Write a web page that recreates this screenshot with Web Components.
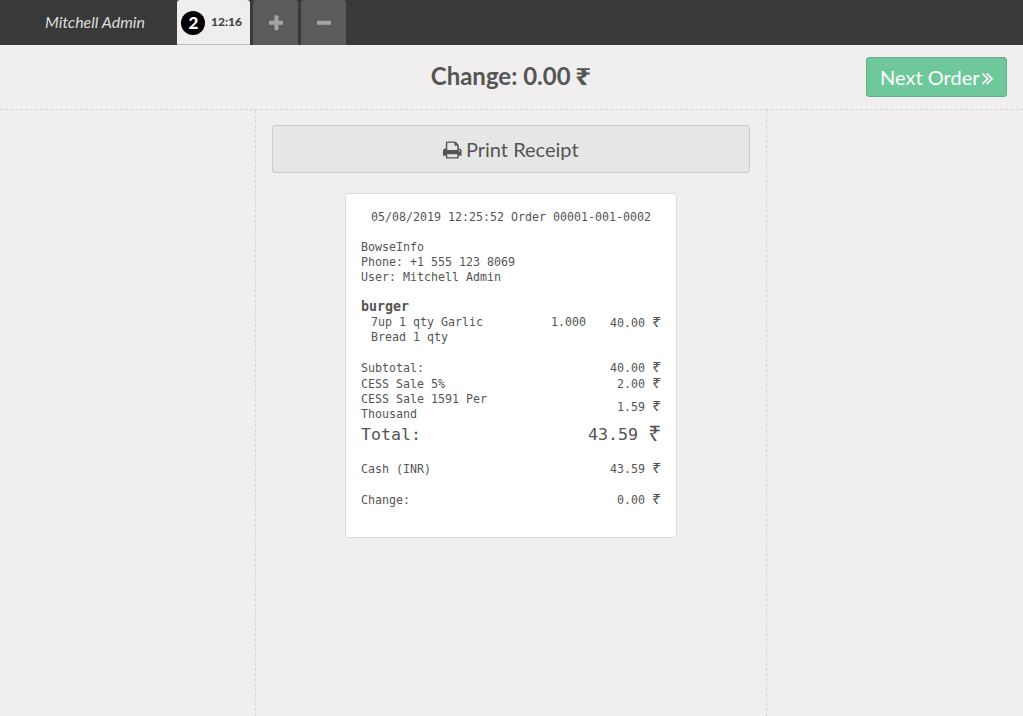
<!DOCTYPE html>
<html lang="en">
<head>
<meta charset="utf-8">
<title>Point of Sale</title>
<style>
html,body{margin:0;height:100%;overflow:hidden}
body{font-family:Lato,"Liberation Sans",sans-serif;color:#555;background:#f0eeee}
</style>
</head>
<body>
<pos-screen></pos-screen>
<script>
const define = (name, html) => {
  const t = document.createElement('template');
  t.innerHTML = html;
  customElements.define(name, class extends HTMLElement {
    constructor() {
      super();
      this.attachShadow({ mode: 'open' }).append(t.content.cloneNode(true));
    }
  });
};

const ICONS = {
  plus: [1408, 'M1408 736v192q0 40-28 68t-68 28h-416v416q0 40-28 68t-68 28h-192q-40 0-68-28t-28-68v-416h-416q-40 0-68-28t-28-68v-192q0-40 28-68t68-28h416v-416q0-40 28-68t68-28h192q40 0 68 28t28 68v416h416q40 0 68 28t28 68z'],
  minus: [1408, 'M1408 736v192q0 40-28 68t-68 28h-1216q-40 0-68-28t-28-68v-192q0-40 28-68t68-28h1216q40 0 68 28t28 68z'],
  print: [1664, 'M384 1536h896v-256h-896v256zM384 896h896v-384h-160q-40 0-68-28t-28-68v-160h-640v640zM1536 960q0-26-19-45t-45-19-45 19-19 45 19 45 45 19 45-19 19-45zM1664 960v416q0 13-9.5 22.5t-22.5 9.5h-224v160q0 40-28 68t-68 28h-960q-40 0-68-28t-28-68v-160h-224q-13 0-22.5-9.5t-9.5-22.5v-416q0-79 56.5-135.5t135.5-56.5h64v-544q0-40 28-68t68-28h672q40 0 88 20t76 48l152 152q28 28 48 76t20 88v256h64q79 0 135.5 56.5t56.5 135.5z'],
  next: [1024, 'M595 960q0 13-10 23l-466 466q-10 10-23 10t-23-10l-50-50q-10-10-10-23t10-23l393-393-393-393q-10-10-10-23t10-23l50-50q10-10 23-10t23 10l466 466q10 10 10 23zM979 960q0 13-10 23l-466 466q-10 10-23 10t-23-10l-50-50q-10-10-10-23t10-23l393-393-393-393q-10-10-10-23t10-23l50-50q10-10 23-10t23 10l466 466q10 10 10 23z']
};
customElements.define('pos-icon', class extends HTMLElement {
  constructor() { super(); this.attachShadow({ mode: 'open' }); }
  connectedCallback() {
    const [w, d] = ICONS[this.getAttribute('name')];
    this.shadowRoot.innerHTML = `<style>:host{display:inline-flex;flex:none}svg{display:block;height:1em;width:${w / 1792}em;fill:currentColor;stroke:currentColor;stroke-width:var(--icon-stroke,0)}</style>
      <svg viewBox="0 0 ${w} 1792" aria-hidden="true"><path d="${d}"/></svg>`;
  }
});

define('order-tab', `<style>
:host{display:flex;align-items:center;justify-content:center;box-sizing:border-box;width:45px;height:45px;font-size:19px;padding:1px 0 0 1px;
background:#5b5b5b;color:#a3a3a3;border-radius:3px 3px 0 0}
:host([active]){width:73px;background:#eee;color:#444;border-bottom:1px solid #bbb;font-size:12px;font-weight:900;justify-content:flex-start;padding:0 0 0 4px;gap:6px}
</style><slot></slot>`);

define('order-number', `<style>
:host{display:block;width:24px;height:24px;border-radius:50%;background:#000;color:#fff;font-size:17px;font-weight:900;line-height:24px;text-align:center;margin-top:1px;text-indent:1px}
</style><slot></slot>`);

define('pos-topbar', `<style>
:host{display:flex;height:45px;background:#393939}
.user{width:177px;box-sizing:border-box;padding-left:45px;font-size:16px;font-style:italic;line-height:44px;color:#ddd;white-space:nowrap}
nav{display:flex;gap:3px}
time{margin-top:-2px}
</style>
<div class="user">Mitchell Admin</div>
<nav>
<order-tab active><order-number>2</order-number><time>12:16</time></order-tab>
<order-tab><pos-icon name="plus"></pos-icon></order-tab>
<order-tab><pos-icon name="minus"></pos-icon></order-tab>
</nav>`);

define('pos-button', `<style>
:host{display:flex;box-sizing:border-box;align-items:center;justify-content:center;gap:4px;font-size:20px;white-space:nowrap;border:1px solid #cacaca;border-radius:3px;background:#e6e6e6;color:#555;height:48px}
:host([primary]){height:40px;width:141px;background:#6ec89b;border-color:#64af8a;color:#fff;padding-left:1px;gap:3px;--icon-stroke:20px}
::slotted(pos-icon){margin-top:1px}
</style><slot></slot>`);

define('rupee-sign', `<style>
:host{display:inline-block;font-family:"Noto Sans",sans-serif;line-height:0;transform:scaleX(1.18);transform-origin:left}
</style>₹`);

define('screen-heading', `<style>
:host{display:grid;grid-template-columns:1fr auto 1fr;box-sizing:border-box;height:65px;padding:0 16px;border-bottom:1px dashed #d5d5d5}
h1{margin:0;padding-right:3px;font-size:24px;font-weight:700;line-height:62px;grid-column:2;white-space:nowrap}
pos-button{justify-self:end;margin-top:12px}
::slotted(rupee-sign){margin-left:-1px}
</style>
<h1><slot></slot></h1>
<pos-button primary><span>Next Order</span><pos-icon name="next"></pos-icon></pos-button>`);

define('receipt-row', `<style>
:host{display:flex;justify-content:space-between;align-items:center;line-height:15px}
:host([total]){font-size:16.62px;line-height:24px}
.label{width:150px}
.amount{white-space:pre;display:flex}
rupee-sign{width:9px;margin-left:7px;font-size:14px;line-height:11px}
:host([total]) rupee-sign{width:13px;margin-left:10px;font-size:20px;line-height:21px}
</style>
<span class="label"><slot></slot></span>
<span class="amount"><slot name="amount"></slot><rupee-sign></rupee-sign></span>`);

define('sale-receipt', `<style>
:host{display:block;box-sizing:border-box;width:332px;height:345px;margin:20px auto 0;padding:16px 15px 14px;background:#fff;border:1px solid #dcdcdc;border-radius:3px;
font:11.63px/15px "DejaVu Sans Mono","Liberation Mono",monospace;color:#555}
header{text-align:center;margin-bottom:15px}
address{font-style:normal;margin-bottom:15px}
h2{font-size:13.29px;line-height:15px;margin:-1px 0 1px}
.line{display:flex;margin-bottom:16px}
.name{width:130px;padding-left:10px}
.qty{width:59px;margin-left:50px}
.price{display:flex;padding-top:1px;height:15px}
.price rupee-sign{width:9px;margin-left:7px;font-size:14px;line-height:11px}
.gap{margin-top:1px}
.pay{margin-top:15px}
.change{margin-top:16px}
</style>
<header>05/08/2019 12:25:52 Order 00001-001-0002</header>
<address>BowseInfo<br>Phone: +1 555 123 8069<br>User: Mitchell Admin</address>
<h2>burger</h2>
<div class="line"><span class="name">7up 1 qty Garlic Bread 1 qty</span><span class="qty">1.000</span><span class="price">40.00<rupee-sign></rupee-sign></span></div>
<receipt-row>Subtotal:<span slot="amount">40.00</span></receipt-row>
<receipt-row class="gap">CESS Sale 5%<span slot="amount">2.00</span></receipt-row>
<receipt-row>CESS Sale 1591 Per Thousand<span slot="amount">1.59</span></receipt-row>
<receipt-row class="gap" total>Total:<span slot="amount">43.59</span></receipt-row>
<receipt-row class="pay">Cash (INR)<span slot="amount">43.59</span></receipt-row>
<receipt-row class="change">Change:<span slot="amount">0.00</span></receipt-row>`);

define('pos-screen', `<style>
:host{display:flex;flex-direction:column;height:100vh}
main{flex:1;display:grid;grid-template-columns:255px 512px 1fr}
section{border:dashed #d5d5d5;border-width:0 1px;padding:15px 16px 0}
</style>
<pos-topbar></pos-topbar>
<screen-heading>Change: 0.00 <rupee-sign></rupee-sign></screen-heading>
<main><div></div><section>
<pos-button><pos-icon name="print"></pos-icon><span>Print Receipt</span></pos-button>
<sale-receipt></sale-receipt>
</section><div></div></main>`);
</script>
</body>
</html>
